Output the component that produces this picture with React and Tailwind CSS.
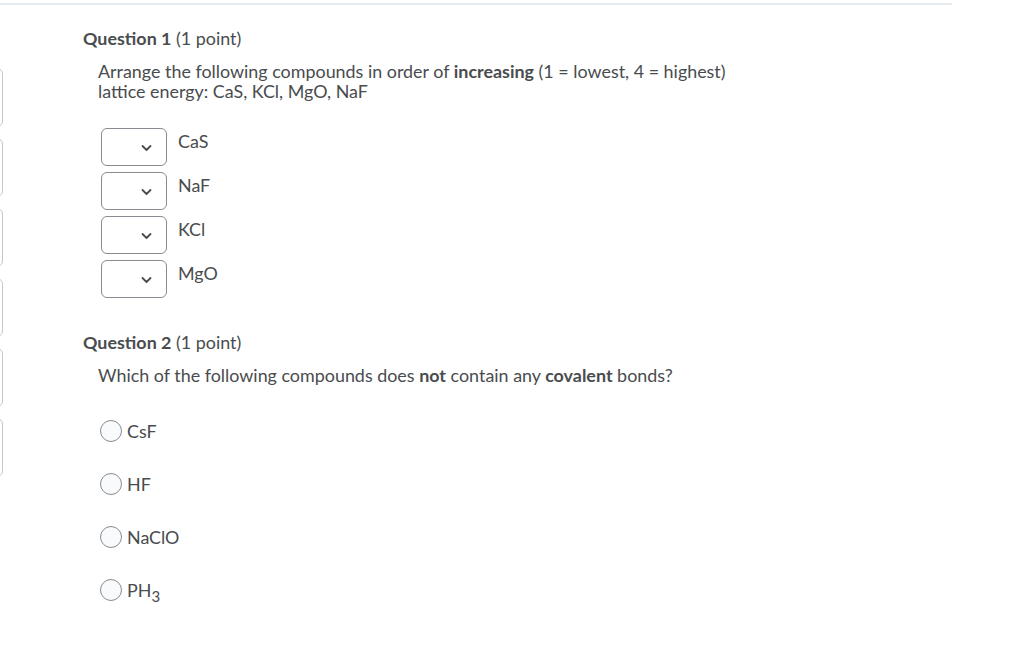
import React from 'react';

const compounds = ['CaS', 'NaF', 'KCl', 'MgO'];
const choices = ['CsF', 'HF', 'NaClO', 'PH3'];

function Chevron() {
  return (
    <svg width="11" height="8" viewBox="0 0 11 8" className="text-[#494c4e]">
      <polyline points="1.5,2 5.5,6 9.5,2" fill="none" stroke="currentColor" strokeWidth="1.8" strokeLinecap="round" strokeLinejoin="round" />
    </svg>
  );
}

function Label({ text }) {
  if (text === 'PH3') {
    return (
      <span>
        PH<span className="inline-block text-[15px] translate-y-[5px]">3</span>
      </span>
    );
  }
  return <span>{text}</span>;
}

export default function App() {
  return (
    <div className="w-[1024px] h-[655px] bg-white overflow-hidden text-[#494c4e]" style={{ fontFamily: 'Lato, "Noto Sans", sans-serif' }}>
      {/* top rule */}
      <div className="w-[952px] h-[2px] bg-[#e6ebf1] mt-[3px]" />

      <div className="flex">
        {/* clipped side rail */}
        <div className="w-[4px] overflow-hidden flex flex-col gap-[11px] pt-[63px]">
          {[0, 1, 2, 3, 4, 5].map((i) => (
            <div key={i} className="w-[20px] h-[59px] -ml-[17px] border border-[#c5c9ce] rounded-[6px]" />
          ))}
        </div>

        <div className="pl-[79px] pt-[21px] text-[17.9px]">
          {/* Question 1 */}
          <h2 className="leading-[24px]">
            <span className="font-bold">Question 1</span> (1 point)
          </h2>
          <div className="pl-[15px]">
            <p className="mt-[11px] leading-[20px] w-[660px]">
              Arrange the following compounds in order of <b>increasing</b> (1 = lowest, 4 = highest) lattice energy: CaS, KCl, MgO, NaF
            </p>
            <div className="mt-[27px] flex flex-col gap-[6px]">
              {compounds.map((c) => (
                <div key={c} className="flex items-start">
                  <div className="w-[66px] h-[38px] ml-[3px] border border-[#868c92] rounded-[6px] flex items-center justify-end pr-[14px] pt-[2px]">
                    <Chevron />
                  </div>
                  <span className="ml-[11px] pt-[3px] leading-[20px]">{c}</span>
                </div>
              ))}
            </div>
          </div>

          {/* Question 2 */}
          <h2 className="mt-[32px] leading-[24px]">
            <span className="font-bold">Question 2</span> (1 point)
          </h2>
          <div className="pl-[15px]">
            <p className="mt-[11px] leading-[20px]">
              Which of the following compounds does <b>not</b> contain any <b>covalent</b> bonds?
            </p>
            <div className="mt-[34px] flex flex-col gap-[29px]">
              {choices.map((c) => (
                <label key={c} className="flex items-center h-[24px]">
                  <span className="w-[22px] h-[22px] ml-[2px] rounded-full border border-[#868c92] bg-[#f9fafb]" />
                  <span className="ml-[5px] leading-[20px]">
                    <Label text={c} />
                  </span>
                </label>
              ))}
            </div>
          </div>
        </div>
      </div>
    </div>
  );
}
